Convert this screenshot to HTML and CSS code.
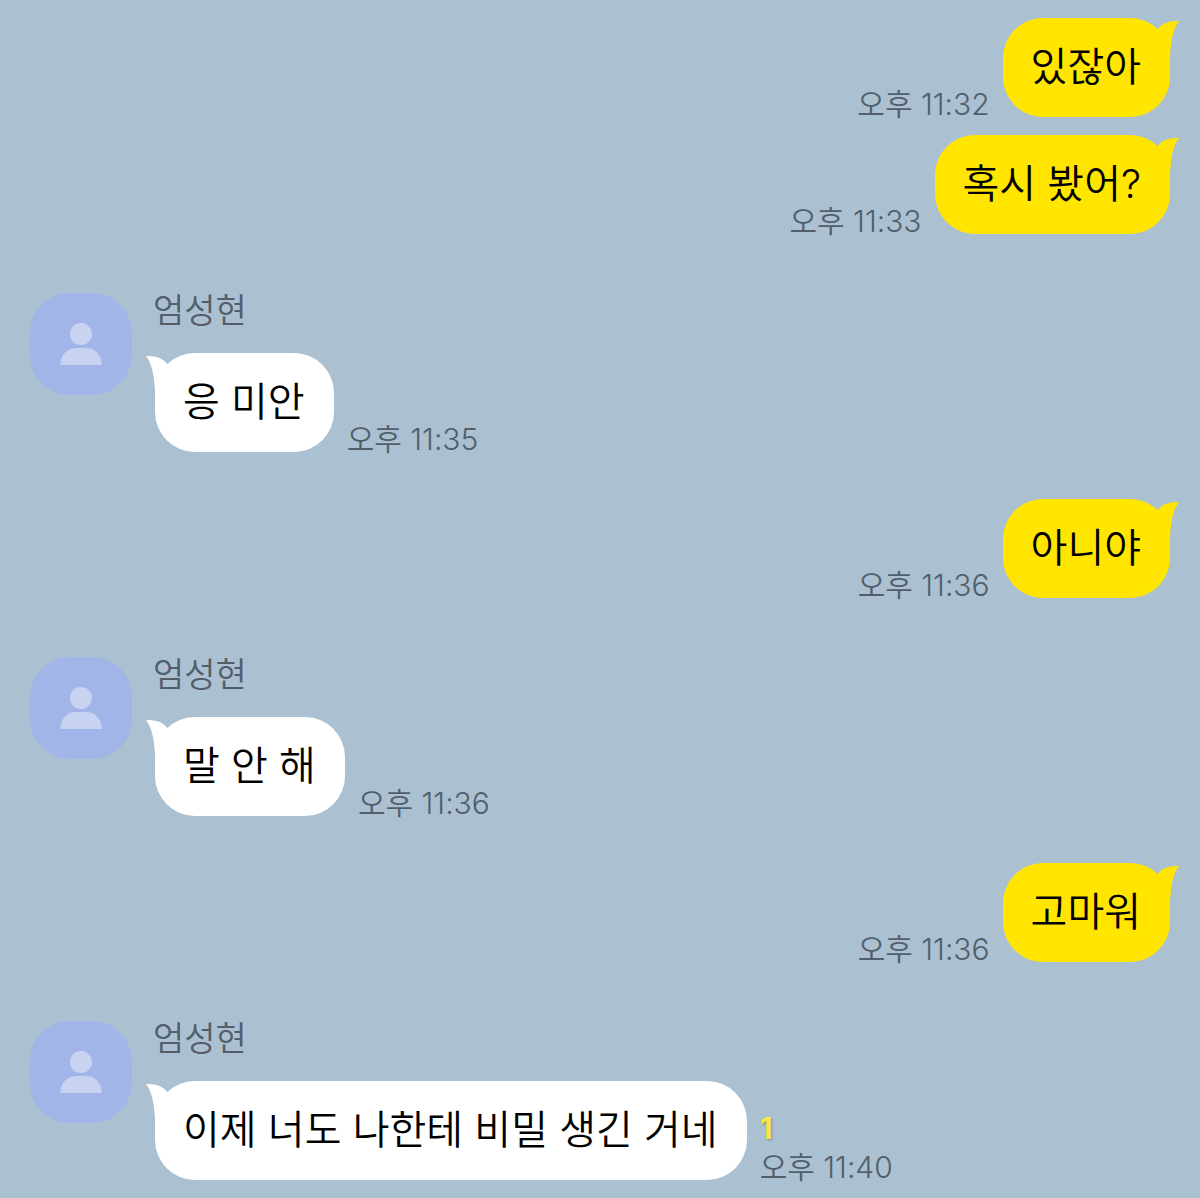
FILE: index.html
```html
<!DOCTYPE html>
<html lang="ko">

<head>
  <meta charset="UTF-8">
  <meta name="viewport" content="width=device-width, initial-scale=1">
  <title>엄성현</title>
  <link rel="stylesheet" href="styles.css">
</head>

<body>
  <!-- shapes shared by all messages -->
  <svg class="defs" width="0" height="0" aria-hidden="true">
    <symbol id="tail" viewBox="0 0 36 48">
      <path d="M14 12 C19 5 25 3 36 3 C31 9 28 20 27 38 L27 48 L0 48 L0 20 Z"/>
    </symbol>
    <symbol id="person" viewBox="0 0 44 44">
      <circle cx="22" cy="12" r="11"/>
      <path d="M1 43 C2 32 8 26 18 26 H26 C36 26 42 32 43 43 Z"/>
    </symbol>
  </svg>

  <main class="chat">
    <div class="group mine">
      <div class="row">
        <div class="info"><time class="time">오후 11:32</time></div>
        <div class="bubble">
          <svg class="tail" aria-hidden="true"><use href="#tail"/></svg>
          <p>있잖아</p>
        </div>
      </div>
      <div class="row">
        <div class="info"><time class="time">오후 11:33</time></div>
        <div class="bubble">
          <svg class="tail" aria-hidden="true"><use href="#tail"/></svg>
          <p>혹시 봤어?</p>
        </div>
      </div>
    </div>

    <div class="group other">
      <div class="avatar">
        <svg class="person" aria-hidden="true"><use href="#person"/></svg>
      </div>
      <div class="content">
        <div class="name">엄성현</div>
        <div class="row">
          <div class="bubble">
            <svg class="tail" aria-hidden="true"><use href="#tail"/></svg>
            <p>응 미안</p>
          </div>
          <div class="info"><time class="time">오후 11:35</time></div>
        </div>
      </div>
    </div>

    <div class="group mine">
      <div class="row">
        <div class="info"><time class="time">오후 11:36</time></div>
        <div class="bubble">
          <svg class="tail" aria-hidden="true"><use href="#tail"/></svg>
          <p>아니야</p>
        </div>
      </div>
    </div>

    <div class="group other">
      <div class="avatar">
        <svg class="person" aria-hidden="true"><use href="#person"/></svg>
      </div>
      <div class="content">
        <div class="name">엄성현</div>
        <div class="row">
          <div class="bubble">
            <svg class="tail" aria-hidden="true"><use href="#tail"/></svg>
            <p>말 안 해</p>
          </div>
          <div class="info"><time class="time">오후 11:36</time></div>
        </div>
      </div>
    </div>

    <div class="group mine">
      <div class="row">
        <div class="info"><time class="time">오후 11:36</time></div>
        <div class="bubble">
          <svg class="tail" aria-hidden="true"><use href="#tail"/></svg>
          <p>고마워</p>
        </div>
      </div>
    </div>

    <div class="group other">
      <div class="avatar">
        <svg class="person" aria-hidden="true"><use href="#person"/></svg>
      </div>
      <div class="content">
        <div class="name">엄성현</div>
        <div class="row">
          <div class="bubble">
            <svg class="tail" aria-hidden="true"><use href="#tail"/></svg>
            <p>이제 너도 나한테 비밀 생긴 거네</p>
          </div>
          <div class="info">
            <span class="unread">1</span>
            <time class="time">오후 11:40</time>
          </div>
        </div>
      </div>
    </div>
  </main>
</body>

</html>
```
FILE: styles.css
```css
* {
  box-sizing: border-box;
}

body {
  margin: 0;
  background-color: #abc0d1;
  font-family: Inter, "Noto Sans CJK KR", sans-serif;
  font-weight: 350;
  color: #000;
}

p {
  margin: 0;
}

.defs {
  position: absolute;
}

.chat {
  padding: 18px 30px;
}

.group + .mine {
  margin-top: 47px;
}

.group + .other {
  margin-top: 59px;
}

.mine {
  display: flex;
  flex-direction: column;
  gap: 18px;
}

.other {
  display: flex;
  gap: 21px;
}

.row {
  display: flex;
  align-items: flex-end;
  gap: 13px;
}

.mine .row {
  justify-content: flex-end;
}

.other .row {
  padding-left: 2px;
}

.bubble {
  position: relative;
  padding: 19px 29px 20px 28px;
  border-radius: 40px;
  background-color: #fff;
  font-size: 40px;
  line-height: 60px;
}

.mine .bubble {
  background-color: #ffe500;
}

/* tail sticks out over the upper corner of the bubble */
.tail {
  position: absolute;
  top: 0;
  left: -9px;
  width: 36px;
  height: 48px;
  fill: #fff;
  transform: scaleX(-1);
}

.mine .tail {
  left: auto;
  right: -9px;
  fill: #ffe500;
  transform: none;
}

.bubble p {
  position: relative;
}

.avatar {
  display: flex;
  flex-shrink: 0;
  align-items: center;
  justify-content: center;
  width: 102px;
  height: 102px;
  border-radius: 40px;
  background-color: #a1b5e9;
}

.person {
  width: 44px;
  height: 44px;
  fill: #c8d3f2;
}

.name {
  height: 60px;
  font-size: 34px;
  line-height: 36px;
  color: #525f6a;
}

.info {
  display: flex;
  flex-direction: column;
  flex-shrink: 0;
  font-size: 30px;
  line-height: 26px;
  color: #525f6a;
}

.unread {
  margin-bottom: 13px;
  font-weight: 700;
  color: #f8e64c;
  text-shadow: 1px 1px 2px #7d8c80;
}
```
